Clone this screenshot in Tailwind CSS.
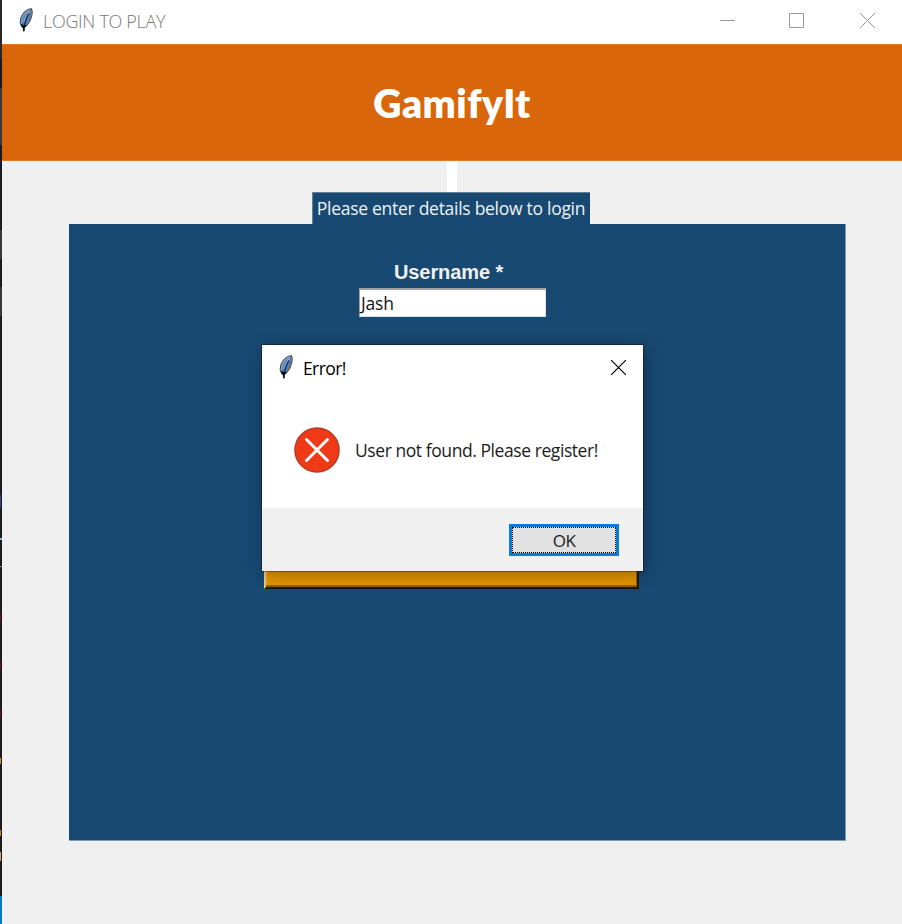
<!DOCTYPE html>
<html lang="en">
<head>
<meta charset="utf-8">
<title>LOGIN TO PLAY</title>
<script src="https://cdn.jsdelivr.net/npm/@tailwindcss/browser@4"></script>
</head>
<body class="overflow-hidden">
<svg class="hidden">
  <symbol id="feather" viewBox="0 0 14 24">
    <path d="M12.5 .7Q8.5 .4 4.8 4.5Q1 9 1.1 14.6L2.6 18.8L4.3 19.3L7.5 18Q11.5 14 12.8 8Q13.8 3 12.5 .7Z" fill="#4583c8" stroke="#3a3d40" stroke-width="1"/>
    <path d="M11 1.8Q6 4 3.4 9L2.2 15.5" fill="none" stroke="#8f9ba6" stroke-width="1.5"/>
    <path d="M10.6 3.6Q6.5 8 4.7 14" fill="none" stroke="#70a7e5" stroke-width="1.8"/>
    <path d="M12.4 2Q12.6 8 8.3 15.5" fill="none" stroke="#73797e" stroke-width="1.7"/>
    <path d="M10 5.5Q5.5 12 4.7 23.5" fill="none" stroke="#15202e" stroke-width="1.2"/>
    <path d="M2.6 16.2L4.5 20L7 17.2M4.8 17V23" fill="none" stroke="#0c0c0c" stroke-width="1.5"/>
  </symbol>
</svg>
<div class="relative flex h-[924px] w-[902px] bg-[#f0f0f0] font-['Open_Sans',sans-serif]">
  <div class="flex w-[2px] shrink-0 flex-col bg-[#1b1a1e]">
    <div class="h-[59px] bg-[#29292b]"></div>
    <div class="mt-[29px] h-[57px] bg-[#39393b]"></div>
    <div class="mt-[85px] h-[29px] bg-[#39393b]"></div>
    <div class="mt-[28px] h-[29px] bg-[#39393b]"></div>
    <div class="mt-[179px] h-[13px] w-px bg-[#3c3c93]"></div>
    <div class="mt-[30px] h-[2px] bg-[#86bce0]"></div>
    <div class="mt-[26px] h-px bg-[#888]"></div>
    <div class="mt-[47px] h-[8px] w-px bg-[#651019]"></div>
    <div class="mt-[40px] h-[8px] w-px bg-[#651019]"></div>
    <div class="mt-[40px] h-[8px] w-px bg-[#651019]"></div>
    <div class="mt-[40px] h-[6px] w-px bg-[#d88b28]"></div>
    <div class="mt-[66px] h-[6px] w-px bg-[#c87e29]"></div>
    <div class="mt-[16px] h-[9px] w-px bg-[#d7a36b]"></div>
    <div class="mt-auto h-[28px] bg-[#0078c8]"></div>
  </div>
  <main class="flex w-[900px] flex-col">
    <header class="flex h-[44px] shrink-0 items-center bg-white pl-[17px]">
      <svg class="mb-[5px] h-[24px] w-[14px]"><use href="#feather"/></svg>
      <span class="mb-[2px] ml-[10px] whitespace-nowrap text-[18px] leading-[42px] font-light tracking-[-0.3px] text-[#777]">LOGIN TO PLAY</span>
      <svg class="mr-[27px] mb-[3px] ml-auto h-[15px] w-[155px]" viewBox="0 0 155 15" fill="none" stroke="#999">
        <path d="M0 7.5H15M69.5 .5H83.5V14.5H69.5Z"/><path d="M140 0L155 15M155 0L140 15"/>
      </svg>
    </header>
    <div class="flex h-[117px] shrink-0 items-center justify-center border-y border-[#df7b2a] bg-[#d9660b]">
      <h1 class="pt-[1px] font-['Lato',sans-serif] text-[39px] leading-[117px] font-extrabold tracking-[0.5px] text-white">GamifyIt</h1>
    </div>
    <div class="ml-[445px] h-[31px] w-[10px] shrink-0 bg-white"></div>
    <div class="ml-[310px] flex h-[32px] w-[278px] shrink-0 items-center justify-center border-t border-l border-[#648197] bg-[#184972]">
      <span class="-ml-px whitespace-nowrap text-[17.5px] tracking-[-0.28px] text-[#eef2f5]">Please enter details below to login</span>
    </div>
    <section class="ml-[67px] flex h-[617px] w-[777px] shrink-0 flex-col border-r border-b border-[#7f9bb1] bg-[#184972]">
      <label class="mt-[35px] ml-[325px] h-[26px] whitespace-nowrap font-['Liberation_Sans',sans-serif] text-[20px] leading-[26px] font-bold tracking-[-0.1px] text-[#f0f0f0]">Username *</label>
      <div class="mt-[3px] ml-[290px] flex h-[29px] w-[187px] items-center border border-t-2 border-[#a0a0a0] border-r-[#d8dfe5] border-b-[#d8dfe5] bg-white pl-[1px] text-[17.5px] tracking-[-0.15px] text-[#111]">Jash</div>
      <div class="mt-[242px] ml-[195px] h-[30px] w-[375px] border-2 border-t-[#ffd47a] border-r-[#211a0c] border-b-[#161815] border-l-[#e5c686] bg-[#e29500] shadow-[inset_-1px_-2px_0_#935f00,inset_1px_0_0_#eaa12a]"></div>
    </section>
  </main>
  <div class="absolute top-[345px] left-[262px] flex h-[226px] w-[381px] flex-col bg-white shadow-[0_0_0_1px_#0005,2px_3px_16px_#0005]">
    <div class="flex h-[44px] items-center pl-[17px]">
      <svg class="h-[24px] w-[14px]"><use href="#feather"/></svg>
      <span class="ml-[10px] pt-[3px] text-[17.5px] tracking-[-0.6px] text-black">Error!</span>
      <svg class="mr-[17px] ml-auto h-[15px] w-[15px]" viewBox="0 0 15 15" fill="none" stroke="#000" stroke-width="1.15"><path d="M0 0L15 15M15 0L0 15"/></svg>
    </div>
    <div class="flex h-[119px] items-center pt-[4px] pl-[32px]">
      <svg class="mb-[2px] h-[46px] w-[46px] shrink-0" viewBox="0 0 46 46"><circle cx="23" cy="23" r="22" fill="#f03a17" stroke="#b93822" stroke-width="1.5"/><path d="M12.5 12.5L33.5 33.5M33.5 12.5L12.5 33.5" stroke="#fff" stroke-width="3" stroke-linecap="round"/></svg>
      <span class="ml-[15px] whitespace-nowrap text-[17.5px] tracking-[-0.43px] text-[#1b1b1b]">User not found. Please register!</span>
    </div>
    <div class="flex h-[63px] items-start justify-end bg-[#f0f0f0] pt-[16px] pr-[24px]">
      <button class="flex h-[32px] w-[110px] border-[3px] border-[#0a7bd7] bg-[#e1e1e1]">
        <span class="flex h-full w-full items-center justify-center border border-dotted border-black pt-[2px] text-[17px] tracking-[-0.5px] text-[#1b1b1b]">OK</span>
      </button>
    </div>
  </div>
</div>
</body>
</html>
